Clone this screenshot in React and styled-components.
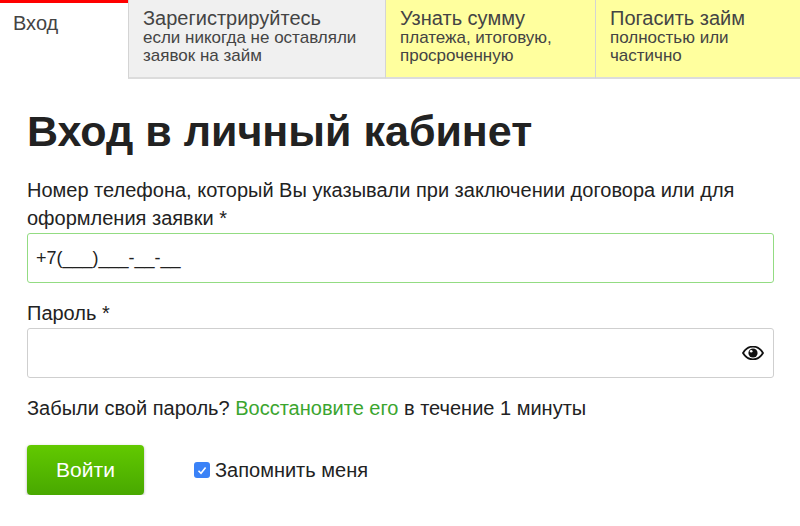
import React, { useState } from "react";
import styled, { createGlobalStyle } from "styled-components";

const GlobalStyle = createGlobalStyle`
  html, body {
    margin: 0;
    padding: 0;
    background: #fff;
  }
  body {
    font-family: "Liberation Sans", Arial, sans-serif;
    color: #222;
  }
`;

const Tabs = styled.div`
  display: grid;
  grid-template-columns: 128px 257px 210px 1fr;
  height: 79px;
`;

const Tab = styled.div`
  box-sizing: border-box;
  padding: ${({ active }) => (active ? "9px 13px" : "7px 14px")};
  background: ${({ active, tone }) =>
    active ? "#fff" : tone === "yellow" ? "#ffff9e" : "#f0f0f0"};
  border-top: ${({ active }) => (active ? "3px solid #f00" : "none")};
  border-left: ${({ active }) => (active ? "none" : "1px solid #d4d4d4")};
  border-bottom: ${({ active }) => (active ? "none" : "2px solid #dcdcdc")};
  color: #444;
`;

const TabTitle = styled.div`
  font-size: 20px;
  line-height: 22px;
`;

const TabNote = styled.div`
  font-size: 17px;
  line-height: 18px;
`;

const Form = styled.form`
  padding: 27px 26px 0 27px;
`;

const Heading = styled.h1`
  margin: 0 0 20px;
  font-size: 43px;
  line-height: 50px;
  font-weight: bold;
  color: #222;
`;

const Label = styled.label`
  display: block;
  font-size: 20px;
  line-height: 28px;
  color: #222;
  margin-bottom: 1px;
`;

const Field = styled.div`
  position: relative;
  margin-bottom: 16px;
`;

const Input = styled.input`
  box-sizing: border-box;
  display: block;
  width: 100%;
  height: 50px;
  padding: 0 8px;
  font-family: inherit;
  font-size: 18px;
  color: #222;
  border: 1px solid ${({ valid }) => (valid ? "#93dc82" : "#cfcfcf")};
  border-radius: 3px;
  outline: none;
  background: #fff;
`;

const EyeButton = styled.span`
  position: absolute;
  right: 10px;
  top: 50%;
  transform: translateY(-50%);
  display: flex;
  color: #111;
`;

const Hint = styled.p`
  margin: 10px 0 23px;
  font-size: 20px;
  line-height: 28px;
  color: #222;
`;

const Link = styled.a`
  color: #3ba52f;
  text-decoration: none;
`;

const Actions = styled.div`
  display: flex;
  align-items: center;
  gap: 50px;
`;

const Submit = styled.button`
  width: 117px;
  height: 50px;
  border: none;
  border-radius: 4px;
  background: linear-gradient(#62c900, #48a800);
  box-shadow: 0 1px 3px rgba(0, 0, 0, 0.3);
  color: #fff;
  font-family: inherit;
  font-size: 21px;
  cursor: pointer;
`;

const Remember = styled.label`
  display: flex;
  align-items: center;
  gap: 5px;
  font-size: 20px;
  color: #222;
`;

const Box = styled.span`
  width: 16px;
  height: 16px;
  border-radius: 3px;
  background: #3a82f7;
  display: flex;
  align-items: center;
  justify-content: center;
`;

const tabs = [
  { title: "Вход", active: true },
  {
    title: "Зарегистрируйтесь",
    note: ["если никогда не оставляли", "заявок на займ"],
  },
  {
    title: "Узнать сумму",
    note: ["платежа, итоговую,", "просроченную"],
    tone: "yellow",
  },
  { title: "Погасить займ", note: ["полностью или", "частично"], tone: "yellow" },
];

const Eye = () => (
  <svg width="22" height="14" viewBox="0 0 22 14">
    <path
      d="M1 7 C4 2 7.5 0.6 11 0.6 C14.5 0.6 18 2 21 7 C18 12 14.5 13.4 11 13.4 C7.5 13.4 4 12 1 7 Z"
      fill="none"
      stroke="#111"
      strokeWidth="1.8"
    />
    <circle cx="11" cy="7" r="4.6" fill="#111" />
    <circle cx="9.2" cy="5.2" r="1.3" fill="#fff" />
  </svg>
);

export default function App() {
  const [remember, setRemember] = useState(true);

  return (
    <>
      <GlobalStyle />
      <Tabs>
        {tabs.map((t) => (
          <Tab key={t.title} active={t.active} tone={t.tone}>
            <TabTitle>{t.title}</TabTitle>
            {t.note && t.note.map((line) => <TabNote key={line}>{line}</TabNote>)}
          </Tab>
        ))}
      </Tabs>
      <Form onSubmit={(e) => e.preventDefault()}>
        <Heading>Вход в личный кабинет</Heading>
        <Label>
          Номер телефона, который Вы указывали при заключении договора или для
          оформления заявки *
        </Label>
        <Field>
          <Input valid defaultValue="+7(___)___-__-__" />
        </Field>
        <Label>Пароль *</Label>
        <Field>
          <Input type="password" />
          <EyeButton>
            <Eye />
          </EyeButton>
        </Field>
        <Hint>
          Забыли свой пароль? <Link href="#">Восстановите его</Link> в течение 1
          минуты
        </Hint>
        <Actions>
          <Submit type="submit">Войти</Submit>
          <Remember onClick={() => setRemember(!remember)}>
            <Box>
              {remember && (
                <svg width="10" height="9" viewBox="0 0 10 9">
                  <path
                    d="M1.5 4.8 L4 7.3 L8.6 1.5"
                    fill="none"
                    stroke="#fff"
                    strokeWidth="1.6"
                  />
                </svg>
              )}
            </Box>
            Запомнить меня
          </Remember>
        </Actions>
      </Form>
    </>
  );
}
